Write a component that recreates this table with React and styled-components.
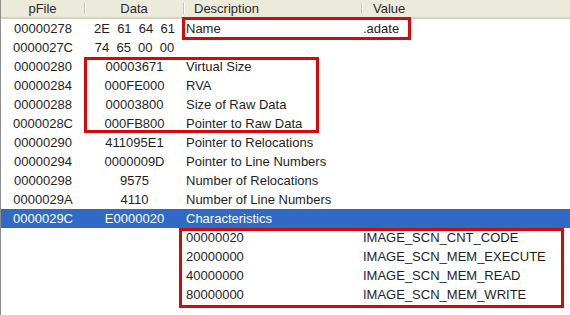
import styled, { createGlobalStyle } from "styled-components";

const GlobalStyle = createGlobalStyle`
  html, body {
    margin: 0;
    padding: 0;
    background: #fff;
  }
  body {
    font-family: "Liberation Sans", Arial, sans-serif;
    font-size: 13px;
    color: #1e1e1e;
  }
`;

const COLS = "84px 99px 178px 1fr";

const rows = [
  { file: "00000278", data: "2E  61  64  61", desc: "Name", value: ".adate" },
  { file: "0000027C", data: "74  65  00  00", desc: "", value: "" },
  { file: "00000280", data: "00003671", desc: "Virtual Size" },
  { file: "00000284", data: "000FE000", desc: "RVA" },
  { file: "00000288", data: "00003800", desc: "Size of Raw Data" },
  { file: "0000028C", data: "000FB800", desc: "Pointer to Raw Data" },
  { file: "00000290", data: "411095E1", desc: "Pointer to Relocations" },
  { file: "00000294", data: "0000009D", desc: "Pointer to Line Numbers" },
  { file: "00000298", data: "9575", desc: "Number of Relocations" },
  { file: "0000029A", data: "4110", desc: "Number of Line Numbers" },
  { file: "0000029C", data: "E0000020", desc: "Characteristics", selected: true },
  { file: "", data: "", desc: "00000020", value: "IMAGE_SCN_CNT_CODE" },
  { file: "", data: "", desc: "20000000", value: "IMAGE_SCN_MEM_EXECUTE" },
  { file: "", data: "", desc: "40000000", value: "IMAGE_SCN_MEM_READ" },
  { file: "", data: "", desc: "80000000", value: "IMAGE_SCN_MEM_WRITE" },
];

const marks = [
  { left: 181, top: 17, width: 229, height: 23 },
  { left: 83, top: 57, width: 235, height: 76 },
  { left: 178, top: 228, width: 385, height: 80 },
];

const Window = styled.div`
  position: relative;
  width: 570px;
  height: 315px;
  overflow: hidden;
  border-left: 1px solid #8e8e8e;
  box-sizing: border-box;
  background: #fff;
`;

const Header = styled.div`
  display: grid;
  grid-template-columns: ${COLS};
  height: 17px;
  background: #ebeadb;
  border-bottom: 2px solid #d6d2c2;
  color: #2a2a2a;
`;

const HeadCell = styled.div`
  display: flex;
  align-items: center;
  justify-content: ${(p) => (p.$center ? "center" : "flex-start")};
  padding-left: ${(p) => (p.$center ? "0" : `${p.$pad || 10}px`)};
  border-right: ${(p) => (p.$last ? "none" : "1px solid transparent")};
  position: relative;
  line-height: 17px;

  &::after {
    content: "";
    display: ${(p) => (p.$last ? "none" : "block")};
    position: absolute;
    right: -1px;
    top: 3px;
    bottom: 3px;
    width: 1px;
    background: #c7c5b2;
    box-shadow: 1px 0 0 #fff;
  }
`;

const Body = styled.div`
  display: flex;
  flex-direction: column;
`;

const Row = styled.div`
  display: grid;
  grid-template-columns: ${COLS};
  height: 19px;
  line-height: 19px;
  background: ${(p) => (p.$selected ? "#316ac5" : "transparent")};
  color: ${(p) => (p.$selected ? "#fff" : "inherit")};
`;

const Cell = styled.div`
  white-space: pre;
  overflow: hidden;
  text-align: ${(p) => (p.$center ? "center" : "left")};
  padding-left: ${(p) => p.$pad || 0}px;
`;

const Mark = styled.div`
  position: absolute;
  border: 3px solid #d10a0a;
  box-sizing: border-box;
  pointer-events: none;
`;

export default function App() {
  return (
    <>
      <GlobalStyle />
      <Window>
        <Header>
          <HeadCell $center>pFile</HeadCell>
          <HeadCell $center>Data</HeadCell>
          <HeadCell $pad={10}>Description</HeadCell>
          <HeadCell $pad={11} $last>
            Value
          </HeadCell>
        </Header>
        <Body>
          {rows.map((r, i) => (
            <Row key={i} $selected={r.selected}>
              <Cell $center>{r.file}</Cell>
              <Cell $center>{r.data}</Cell>
              <Cell $pad={2}>{r.desc}</Cell>
              <Cell $pad={1}>{r.value || ""}</Cell>
            </Row>
          ))}
        </Body>
        {marks.map((m, i) => (
          <Mark
            key={i}
            style={{ left: m.left, top: m.top, width: m.width, height: m.height }}
          />
        ))}
      </Window>
    </>
  );
}
